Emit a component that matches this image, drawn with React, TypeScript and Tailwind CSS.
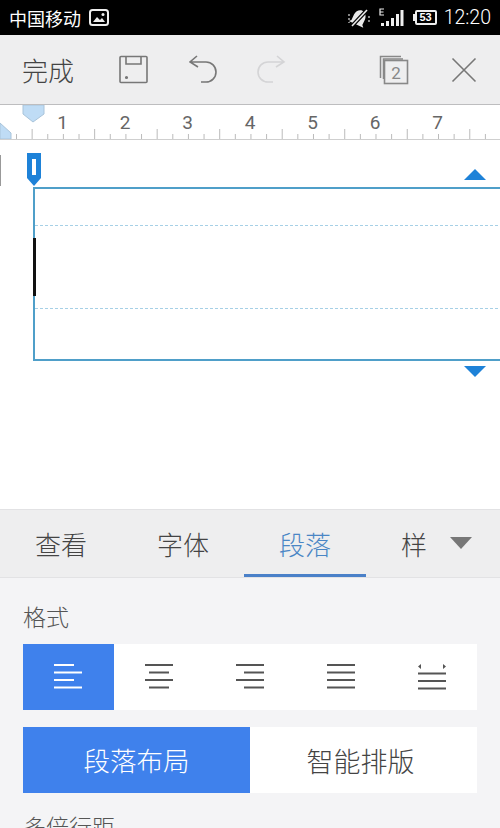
const cjk = "font-['Noto_Sans_CJK_SC','Noto_Sans',sans-serif]";

function StatusBar() {
  return (
    <div className="flex h-[35px] shrink-0 items-center bg-black pl-[9px] pr-[9px] text-white">
      <span className="text-[18px] leading-none">中国移动</span>
      <svg width="20" height="17" viewBox="0 0 20 17" className="ml-[8px]">
        <rect x="1" y="1" width="18" height="15" rx="2.5" fill="none" stroke="#eee" strokeWidth="2" />
        <path d="M4 13l4-5 3 3 2-2 3 4z" fill="#eee" />
        <circle cx="14" cy="5.5" r="1.5" fill="#eee" />
      </svg>
      <div className="flex-1" />
      <svg width="22" height="20" viewBox="0 0 22 20" className="mr-[9px]">
        <g transform="rotate(25 11 10)">
          <path d="M5 15V9c0-4 3-7 6-7s6 3 6 7v6l2 2H3z" fill="#e8e8e8" />
        </g>
        <path d="M3 19L20 1" stroke="#000" strokeWidth="4" />
        <path d="M4 18L19 2" stroke="#e8e8e8" strokeWidth="1.6" />
        <path d="M1 6v2M1 10v2M1 14v1M21 8v2M21 12v2" stroke="#bbb" strokeWidth="1.4" />
      </svg>
      <svg width="26" height="20" viewBox="0 0 26 20" className="mr-[10px]">
        <path d="M5 1H1v6h4M1 4h3.500" fill="none" stroke="#eee" strokeWidth="1.200" />
        <rect x="2" y="15" width="3" height="3" fill="#eee" />
        <rect x="7" y="13" width="3" height="5" fill="#eee" />
        <rect x="12" y="10" width="3" height="8" fill="#eee" />
        <rect x="17" y="6" width="3" height="12" fill="#eee" />
        <rect x="21.500" y="2" width="3" height="16" fill="#eee" />
      </svg>
      <div className="relative mr-[7px] flex h-[15px] w-[22px] items-center justify-center rounded-[2px] border-2 border-[#eee] font-['Liberation_Sans',sans-serif] text-[11px] font-bold leading-none">
        <span className="absolute left-[-4px] top-[2px] h-[7px] w-[2px] bg-[#eee]" />
        53
      </div>
      <span className="font-['Roboto',sans-serif] text-[19.5px] font-light leading-none">12:20</span>
    </div>
  );
}

function Toolbar() {
  return (
    <div className="flex h-[70px] shrink-0 items-center border-b border-[#bdbdbf] bg-[#eeeeef] pl-[22px]">
      <span className="w-[54px] text-[26px] font-light leading-none text-[#444]">完成</span>
      <svg width="30" height="30" viewBox="0 0 30 30" className="ml-[43px]" fill="none" stroke="#777" strokeWidth="1.6">
        <rect x="1" y="1.500" width="27" height="26" rx="1" />
        <path d="M7 2v7h15V2" />
        <circle cx="7.500" cy="22.500" r="0.8" fill="#777" />
      </svg>
      <svg width="30" height="30" viewBox="0 0 30 30" className="ml-[40px]" fill="none" stroke="#777" strokeWidth="1.6">
        <path d="M8 1L1 7l8 5M1 7h16a10 10 0 0 1 0 20h-5" />
      </svg>
      <svg width="30" height="30" viewBox="0 0 30 30" className="ml-[37px]" fill="none" stroke="#d4d4d6" strokeWidth="1.6">
        <path d="M21 1l7 6-8 5M28 7H12a10 10 0 0 0 0 20h5" />
      </svg>
      <div className="flex-1" />
      <svg width="30" height="30" viewBox="0 0 30 30" className="mr-[42px]" fill="none" stroke="#888">
        <path d="M22 1.500H1.500V23" strokeWidth="1.500" />
        <path d="M24 4H4.500v20" strokeWidth="1.500" />
        <rect x="5.500" y="5.500" width="23" height="23" strokeWidth="1.600" />
        <text x="17" y="24" textAnchor="middle" fontSize="17" fill="#888" stroke="none" fontFamily="Roboto, sans-serif">2</text>
      </svg>
      <svg width="26" height="26" viewBox="0 0 26 26" className="mr-[23px]" fill="none" stroke="#777" strokeWidth="1.600">
        <path d="M1.500 1.500l23 23M24.500 1.500l-23 23" />
      </svg>
    </div>
  );
}

function Ruler() {
  const ticks = Array.from({ length: 32 }, (_, i) => i);
  const numbers = [1, 2, 3, 4, 5, 6, 7];
  return (
    <svg width="500" height="35" viewBox="0 0 500 35" className="block shrink-0">
      <path d="M0 18l11 10v6H0z" fill="#bfdcf5" stroke="#a9c4da" strokeWidth="1" />
      <path d="M23 0v9l10 8 11-8V0z" fill="#bfdcf5" stroke="#a9c4da" strokeWidth="1" />
      <path d="M0 34.500h500" stroke="#cfcfcf" strokeWidth="1" />
      {ticks.map((i) => {
        const x = 16.500 + i * 15.63;
        const h = i % 4 === 1 ? 10 : 5;
        return <path key={i} d={`M${x} 34V${34 - h}`} stroke="#bbb" strokeWidth="1" />;
      })}
      {numbers.map((n) => (
        <text key={n} x={62.500 + (n - 1) * 62.500} y="24" textAnchor="middle" fontSize="19" fill="#666" fontFamily="Roboto, sans-serif">
          {n}
        </text>
      ))}
    </svg>
  );
}

function Document() {
  return (
    <div className="relative h-[369px] shrink-0 overflow-hidden bg-white pl-[33px] pt-[47px]">
      <div className="absolute left-0 top-[15px] h-[31px] w-[1px] bg-[#999]" />
      <svg width="16" height="34" viewBox="0 0 16 34" className="absolute left-[26px] top-[13px]">
        <path d="M1 0h14v25l-7 8-7-8z" fill="#1e82d8" />
        <rect x="6" y="6" width="4" height="16" fill="#fff" />
      </svg>
      <svg width="24" height="13" viewBox="0 0 24 13" className="absolute left-[463px] top-[28px]">
        <path d="M12 1l11 11H1z" fill="#1e82d8" />
      </svg>
      <svg width="24" height="13" viewBox="0 0 24 13" className="absolute left-[463px] top-[225px]">
        <path d="M1 1h22L12 12z" fill="#1e82d8" />
      </svg>
      <div className="relative h-[174px] w-[480px] border-2 border-r-0 border-[#4f9fc9]">
        <div className="mt-[36px] h-0 border-t border-dashed border-[#a6d0e6]" />
        <div className="mt-[82px] h-0 border-t border-dashed border-[#a6d0e6]" />
        <div className="absolute left-[-2px] top-[49px] h-[58px] w-[3px] bg-[#111]" />
      </div>
    </div>
  );
}

function Tabs() {
  return (
    <div className="flex h-[69px] shrink-0 items-center border-y border-[#e2e2e4] bg-[#eeeeef] text-[26px] font-light leading-none text-[#444]">
      <div className="w-[122px] text-center">查看</div>
      <div className="w-[122px] text-center">字体</div>
      <div className="relative flex h-full w-[122px] items-center justify-center text-[#4a86c5]">
        段落
        <div className="absolute inset-x-0 bottom-0 h-[3px] bg-[#4a80c8]" />
      </div>
      <div className="ml-[35px] w-[26px]">样</div>
      <svg width="24" height="14" viewBox="0 0 24 14" className="ml-[22px] mb-[1px]">
        <path d="M1 1h22L12 13z" fill="#777" />
      </svg>
    </div>
  );
}

function AlignIcon({ rows, color }: { rows: [number, number][]; color: string }) {
  return (
    <svg width="30" height="26" viewBox="0 0 30 26" fill="none" stroke={color} strokeWidth="2">
      {rows.map(([x1, x2], i) => (
        <path key={i} d={`M${x1} ${1 + i * 7.500}H${x2}`} />
      ))}
    </svg>
  );
}

function Panel() {
  return (
    <div className="min-h-0 flex-1 bg-[#f4f4f6] px-[23px] pt-[27px]">
      <div className="text-[23px] font-light leading-none text-[#555]">格式</div>
      <div className="mt-[16px] grid h-[66px] grid-cols-5 bg-white">
        <div className="flex items-center justify-center bg-[#3f81ec]">
          <AlignIcon color="#fff" rows={[[1, 21], [1, 29], [1, 21], [1, 29]]} />
        </div>
        <div className="flex items-center justify-center">
          <AlignIcon color="#555" rows={[[1, 29], [5, 25], [1, 29], [5, 25]]} />
        </div>
        <div className="flex items-center justify-center">
          <AlignIcon color="#555" rows={[[1, 29], [9, 29], [1, 29], [9, 29]]} />
        </div>
        <div className="flex items-center justify-center">
          <AlignIcon color="#555" rows={[[1, 29], [1, 29], [1, 29], [1, 29]]} />
        </div>
        <div className="flex items-center justify-center">
          <svg width="30" height="26" viewBox="0 0 30 26" fill="none" stroke="#555" strokeWidth="2">
            <path d="M1 2.500l3-2.500v5zM29 2.500l-3-2.500v5z" fill="#555" stroke="none" />
            <path d="M1 9.500h28M1 17h28M1 24.500h28" />
          </svg>
        </div>
      </div>
      <div className="mt-[17px] grid h-[66px] grid-cols-2 bg-white font-light leading-none">
        <div className="flex items-center justify-center bg-[#3f81ec] text-[26.5px] text-white">段落布局</div>
        <div className="flex items-center justify-center pr-[6px] text-[27px] text-[#444]">智能排版</div>
      </div>
      <div className="mt-[22px] text-[23px] font-light leading-none text-[#555]">多倍行距</div>
    </div>
  );
}

export default function App() {
  return (
    <div className={`flex h-[828px] w-[500px] flex-col overflow-hidden bg-white ${cjk}`}>
      <StatusBar />
      <Toolbar />
      <Ruler />
      <Document />
      <Tabs />
      <Panel />
    </div>
  );
}
